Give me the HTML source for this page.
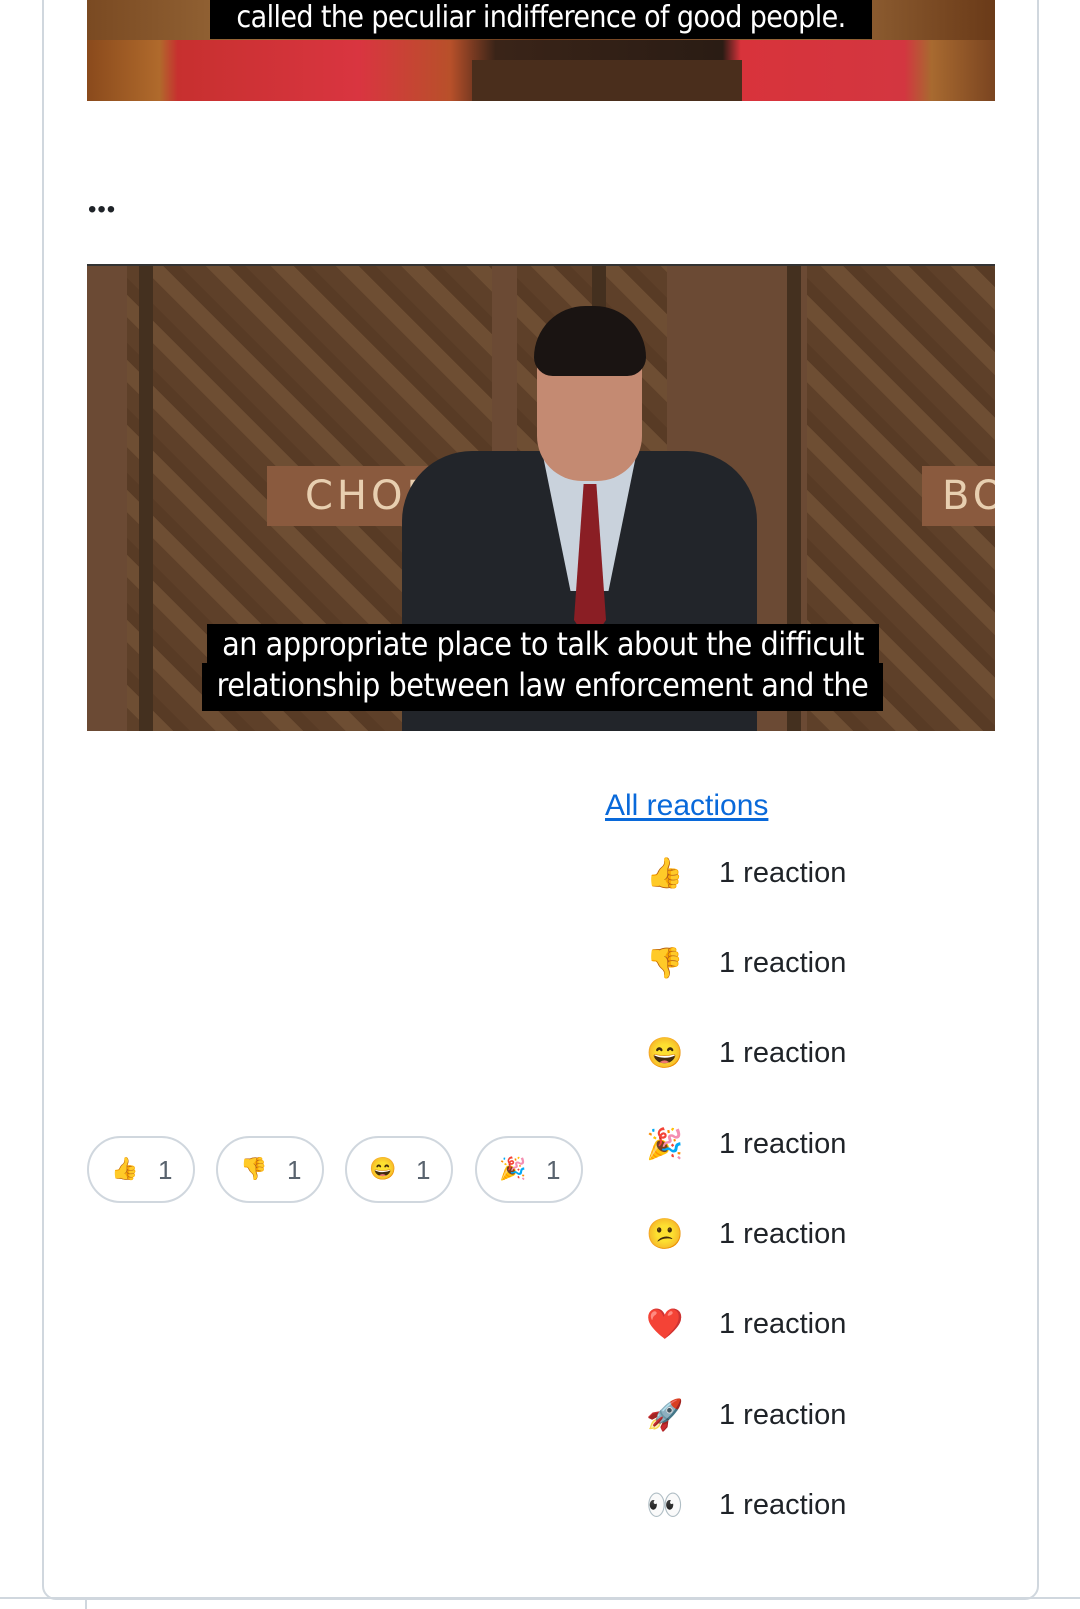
<!DOCTYPE html>
<html><head><meta charset="utf-8">
<style>
*{margin:0;padding:0;box-sizing:border-box}
html,body{width:1080px;height:1609px;background:#fff;overflow:hidden;font-family:"Liberation Sans",sans-serif;position:relative}
.card{position:absolute;left:42px;top:-20px;width:997px;height:1620px;border:2px solid #d0d7de;border-radius:14px;}
.img1{position:absolute;left:87px;top:0;width:908px;height:101px;overflow:hidden;
background:linear-gradient(90deg,#8a4a1c 0,#b06a2c 8%,#c7302f 10%,#d93540 30%,#b8502a 40%,#3a2418 45%,#2a1c14 70%,#d8333b 72%,#d33640 90%,#a86a30 93%,#7a4420 100%);}
.img1 .top{position:absolute;left:0;top:0;width:100%;height:40px;background:linear-gradient(90deg,#7a4a22,#9a6a3a 20%,#6a3a1c 50%,#9a6a3a 80%,#6a3a18)}
.img1 .pod{position:absolute;left:385px;top:60px;width:270px;height:41px;background:#4a2e1c}
.cap1{position:absolute;left:123px;top:0;width:662px;height:39px;background:#000;color:#fff;font-size:30px;line-height:36px;text-align:center;font-family:"DejaVu Sans Condensed","Liberation Sans Narrow","Liberation Sans",sans-serif;letter-spacing:-0.6px}
.dots{position:absolute;left:88px;top:196px;font-size:24px;color:#1f2328;letter-spacing:1px}
.img2{position:absolute;left:87px;top:264px;width:908px;height:467px;overflow:hidden;border-top:2px solid #333;
background:#6b4a34;}
.pan{position:absolute;top:0;height:467px;background:repeating-linear-gradient(45deg,#5e4029 0 18px,#6e4e33 18px 34px,#583b25 34px 46px);}
.strip{position:absolute;top:0;height:467px;width:14px;background:#44301f}
.sign{position:absolute;background:#8a5a3e;color:#e8cfb0;font-size:40px;letter-spacing:4px;font-family:"DejaVu Sans",sans-serif;line-height:60px;padding-left:38px;overflow:hidden}
.head{position:absolute;left:450px;top:50px;width:105px;height:165px;border-radius:48px 48px 45px 45px;background:#c48a72}
.hair{position:absolute;left:447px;top:40px;width:112px;height:70px;border-radius:55px 55px 20px 20px;background:#1a1412}
.suit{position:absolute;left:315px;top:185px;width:355px;height:290px;border-radius:70px 70px 0 0;background:#22252a}
.shirt{position:absolute;left:455px;top:185px;width:95px;height:140px;background:#c9d2dc;clip-path:polygon(0 0,100% 0,70% 100%,30% 100%)}
.tie{position:absolute;left:487px;top:218px;width:32px;height:160px;background:#8a1e24;clip-path:polygon(30% 0,70% 0,100% 85%,50% 100%,0 85%)}
.cap{position:absolute;background:#000;color:#fff;font-size:32px;text-align:center;font-family:"DejaVu Sans Condensed","Liberation Sans",sans-serif;letter-spacing:-0.5px;white-space:nowrap}
.link{position:absolute;left:605px;top:789px;font-size:30px;color:#0969da;text-decoration:underline;text-underline-offset:3px}
.row{position:absolute;left:643px;height:40px;font-size:29px;color:#1f2328;white-space:nowrap}
.row .e{position:absolute;left:0;top:2px;width:44px;text-align:center;font-size:30px;font-family:"Noto Color Emoji","DejaVu Sans",sans-serif}
.row .t{position:absolute;left:76px;top:3px}
.pill{position:absolute;top:1136px;height:67px;width:108px;border:2px solid #d0d7de;border-radius:34px;font-size:26px;color:#59636e}
.pill .e{position:absolute;left:22px;top:19px;font-size:22px;font-family:"Noto Color Emoji","DejaVu Sans",sans-serif}
.pill .n{position:absolute;left:69px;top:17px}
.bot{position:absolute;left:0;top:1597px;width:1080px;height:2px;background:#d0d7de}
.bot2{position:absolute;left:85px;top:1597px;width:2px;height:12px;background:#d0d7de}
</style></head><body>
<div class="card"></div>
<div class="img1"><div class="top"></div><div class="pod"></div><div class="cap1">called the peculiar indifference of good people.</div></div>
<div class="dots">•••</div>
<div class="img2">
 <div class="pan" style="left:40px;width:365px"></div>
 <div class="pan" style="left:430px;width:150px"></div>
 <div class="pan" style="left:720px;width:193px"></div>
 <div class="strip" style="left:52px"></div><div class="strip" style="left:505px"></div><div class="strip" style="left:700px"></div>
 <div class="sign" style="left:180px;top:200px;width:250px">CHOM</div>
 <div class="sign" style="left:835px;top:200px;width:90px;padding-left:20px">BO</div>
 <div class="suit"></div><div class="shirt"></div><div class="tie"></div>
 <div class="head"></div><div class="hair"></div>
 <div class="cap" style="left:120px;top:358px;width:672px;height:40px;line-height:40px">an appropriate place to talk about the difficult</div>
 <div class="cap" style="left:115px;top:397px;width:681px;height:48px;line-height:44px">relationship between law enforcement and the</div>
</div>
<a class="link">All reactions</a>
<div class="row" style="top:854px"><span class="e">👍</span><span class="t">1 reaction</span></div>
<div class="row" style="top:944px"><span class="e">👎</span><span class="t">1 reaction</span></div>
<div class="row" style="top:1034px"><span class="e">😄</span><span class="t">1 reaction</span></div>
<div class="row" style="top:1125px"><span class="e">🎉</span><span class="t">1 reaction</span></div>
<div class="row" style="top:1215px"><span class="e">😕</span><span class="t">1 reaction</span></div>
<div class="row" style="top:1305px"><span class="e">❤️</span><span class="t">1 reaction</span></div>
<div class="row" style="top:1396px"><span class="e">🚀</span><span class="t">1 reaction</span></div>
<div class="row" style="top:1486px"><span class="e">👀</span><span class="t">1 reaction</span></div>
<div class="pill" style="left:87px"><span class="e">👍</span><span class="n">1</span></div>
<div class="pill" style="left:216px"><span class="e">👎</span><span class="n">1</span></div>
<div class="pill" style="left:345px"><span class="e">😄</span><span class="n">1</span></div>
<div class="pill" style="left:475px"><span class="e">🎉</span><span class="n">1</span></div>
<div class="bot"></div><div class="bot2"></div>
</body></html>
